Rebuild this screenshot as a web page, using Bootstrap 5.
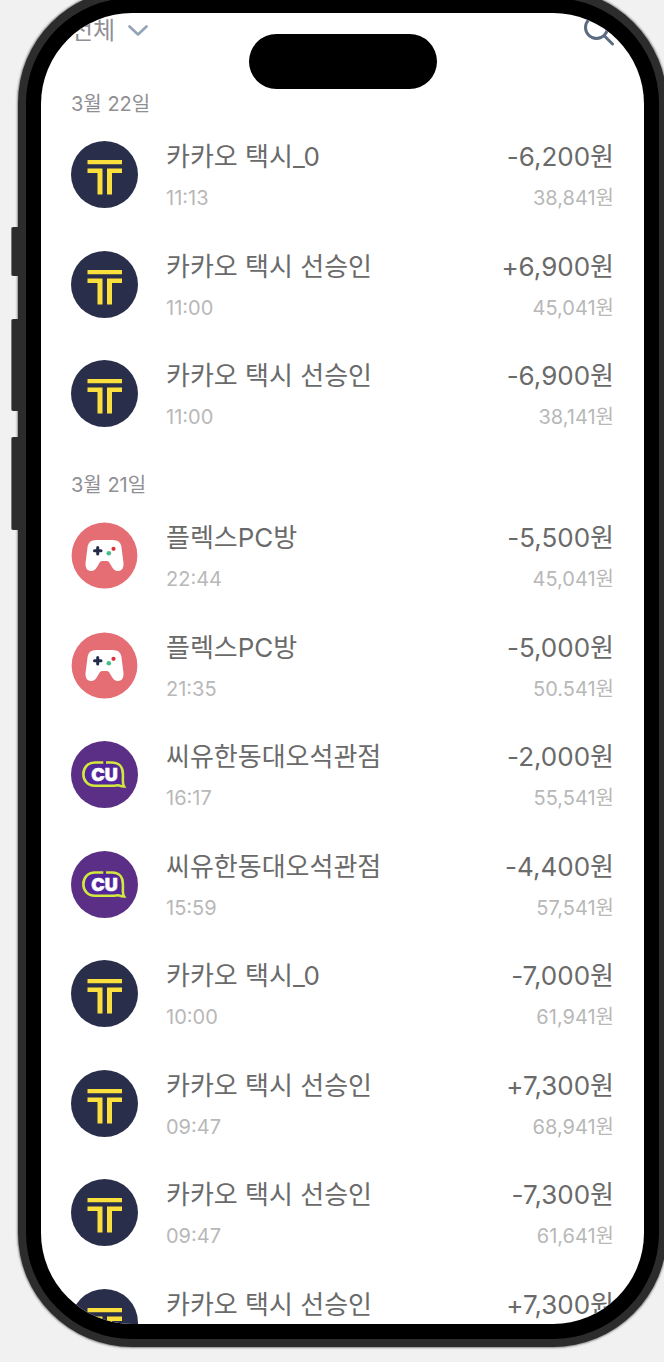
<!DOCTYPE html>
<html lang="ko">
<head>
<meta charset="utf-8">
<meta name="viewport" content="width=device-width, initial-scale=1">
<title>거래내역</title>
<link href="https://cdn.jsdelivr.net/npm/bootstrap@5.3.0/dist/css/bootstrap.min.css" rel="stylesheet">
<style>
  body { background: #f1f1f1; font-family: Inter, "Noto Sans CJK KR", sans-serif; }
  .device { margin: -11px -3px 15px 18px; padding: 15px; background: #000; border: 8px solid #2c2c2c; border-top-width: 9px; border-radius: 114px; box-shadow: 0 0 2px 1px #8a8a8a; min-height: 0; }
  .side-key { left: -15px; width: 7px; background: #2c2c2c; border-left: 1px solid #777; border-radius: 2px 0 0 2px; }
  .key-action { top: 229px; height: 49px; }
  .key-up { top: 321px; height: 92px; }
  .key-down { top: 439px; height: 93px; }
  .screen { border-radius: 91px; }
  .island { top: 21px; width: 188px; height: 55px; }
  .toolbar { height: 36px; margin-bottom: 19px; padding: 0 28px 0 30px; }
  .filter { appearance: none; border: 0; padding: 0 32px 0 0; font-size: 24px; line-height: 36px; color: #8f8f94;
    background: url("data:image/svg+xml,%3Csvg xmlns='http://www.w3.org/2000/svg' viewBox='0 0 20 12'%3E%3Cpath d='M1.5 1.5 10 9.5l8.500-8' fill='none' stroke='%2394a3b8' stroke-width='2.600' stroke-linecap='round' stroke-linejoin='round'/%3E%3C/svg%3E") no-repeat right 0 center / 20px 12px; }
  .day { height: 52px; padding: 20px 30px 0; font-size: 20px; line-height: 32px; font-weight: 400; color: #8f8f94; }
  .entry { height: 110px; padding: 16px 30px 0 30px; gap: 28px; }
  .entry:nth-child(even) { height: 109px; }
  .logo { width: 67px; height: 67px; margin-top: 5px; }
  .title { font-size: 26px; line-height: 42px; color: #6a6a6a; }
  .meta { font-size: 20px; line-height: 40px; color: #b8b8b8; }
</style>
</head>
<body>
<svg class="d-none" aria-hidden="true">
  <symbol id="taxi" viewBox="0 0 67 67">
    <circle cx="33.500" cy="33.500" r="33.500" fill="#292e4b"/>
    <path fill="#fbdf3c" d="M16.500 19H51v4.300H16.500zM16.500 27.600h15v26h-5V32h-10zM36 27.600h15V32H41v21.600h-5z"/>
  </symbol>
  <symbol id="game" viewBox="0 0 67 67">
    <circle cx="33.500" cy="33.500" r="32.900" fill="#e56d74"/>
    <path fill="#fff" d="M25 18h17q7 0 8.300 6l2.200 17q.5 7-5 8-4 .5-6.500-4l-3-5q-1-1-2.500-1h-4q-1.500 0-2.500 1l-3 5q-2.500 4.500-6.500 4-5.500-1-5-8l2.200-17q1.300-6 8.300-6z"/>
    <path stroke="#222c48" stroke-width="3" stroke-linecap="round" d="M23.500 28.800h6.500M26.700 25.500v6.500"/>
    <circle cx="37.800" cy="31.300" r="2.300" fill="#45bd88"/><circle cx="42.500" cy="26.800" r="2.100" fill="#d9333c"/>
  </symbol>
  <symbol id="cu" viewBox="0 0 67 67">
    <circle cx="33.500" cy="33.500" r="33.500" fill="#5c2f87"/>
    <path fill="#53259a" stroke="#d1e83c" stroke-width="2.600" d="M32.300 21.500H24c-15.500 0-15.500 23.300 0 23.300h17c4 0 5-1 7-.4 1.500.6 3 1.100 5 1.100-1.300-2-1.300-4-1.100-8V33c0-7-4-11.500-10.500-11.500H35"/>
    <text x="33.500" y="40" text-anchor="middle" font-family="Inter, sans-serif" font-weight="900" font-size="18" fill="#fff" stroke="#fff" stroke-width=".5">CU</text>
  </symbol>
</svg>

<div class="vh-100 overflow-hidden d-flex flex-column">
  <div class="device position-relative flex-grow-1 d-flex">
    <span class="side-key key-action position-absolute"></span>
    <span class="side-key key-up position-absolute"></span>
    <span class="side-key key-down position-absolute"></span>
    <main class="screen position-relative flex-grow-1 overflow-hidden bg-white">
      <div class="island position-absolute start-50 translate-middle-x bg-black rounded-pill"></div>
      <header class="toolbar d-flex align-items-center justify-content-between">
        <select class="filter" aria-label="거래 구분"><option>전체</option></select>
        <button class="btn p-0 border-0 lh-1" type="button" aria-label="검색">
          <svg width="32" height="32" viewBox="0 0 32 32" fill="none" stroke="#5b6b80" stroke-width="3" stroke-linecap="round"><circle cx="12.500" cy="12.500" r="11"/><path d="m20.500 21 8 8"/></svg>
        </button>
      </header>

      <h2 class="day m-0">3월 22일</h2>
      <ul class="list-unstyled m-0">
        <li class="entry d-flex"><svg class="logo flex-shrink-0"><use href="#taxi"/></svg><div class="flex-grow-1"><div class="title">카카오 택시_0</div><div class="meta">11:13</div></div><div class="text-end"><div class="title">-6,200원</div><div class="meta">38,841원</div></div></li>
        <li class="entry d-flex"><svg class="logo flex-shrink-0"><use href="#taxi"/></svg><div class="flex-grow-1"><div class="title">카카오 택시 선승인</div><div class="meta">11:00</div></div><div class="text-end"><div class="title">+6,900원</div><div class="meta">45,041원</div></div></li>
        <li class="entry d-flex"><svg class="logo flex-shrink-0"><use href="#taxi"/></svg><div class="flex-grow-1"><div class="title">카카오 택시 선승인</div><div class="meta">11:00</div></div><div class="text-end"><div class="title">-6,900원</div><div class="meta">38,141원</div></div></li>
      </ul>

      <h2 class="day m-0">3월 21일</h2>
      <ul class="list-unstyled m-0">
        <li class="entry d-flex"><svg class="logo flex-shrink-0"><use href="#game"/></svg><div class="flex-grow-1"><div class="title">플렉스PC방</div><div class="meta">22:44</div></div><div class="text-end"><div class="title">-5,500원</div><div class="meta">45,041원</div></div></li>
        <li class="entry d-flex"><svg class="logo flex-shrink-0"><use href="#game"/></svg><div class="flex-grow-1"><div class="title">플렉스PC방</div><div class="meta">21:35</div></div><div class="text-end"><div class="title">-5,000원</div><div class="meta">50.541원</div></div></li>
        <li class="entry d-flex"><svg class="logo flex-shrink-0"><use href="#cu"/></svg><div class="flex-grow-1"><div class="title">씨유한동대오석관점</div><div class="meta">16:17</div></div><div class="text-end"><div class="title">-2,000원</div><div class="meta">55,541원</div></div></li>
        <li class="entry d-flex"><svg class="logo flex-shrink-0"><use href="#cu"/></svg><div class="flex-grow-1"><div class="title">씨유한동대오석관점</div><div class="meta">15:59</div></div><div class="text-end"><div class="title">-4,400원</div><div class="meta">57,541원</div></div></li>
        <li class="entry d-flex"><svg class="logo flex-shrink-0"><use href="#taxi"/></svg><div class="flex-grow-1"><div class="title">카카오 택시_0</div><div class="meta">10:00</div></div><div class="text-end"><div class="title">-7,000원</div><div class="meta">61,941원</div></div></li>
        <li class="entry d-flex"><svg class="logo flex-shrink-0"><use href="#taxi"/></svg><div class="flex-grow-1"><div class="title">카카오 택시 선승인</div><div class="meta">09:47</div></div><div class="text-end"><div class="title">+7,300원</div><div class="meta">68,941원</div></div></li>
        <li class="entry d-flex"><svg class="logo flex-shrink-0"><use href="#taxi"/></svg><div class="flex-grow-1"><div class="title">카카오 택시 선승인</div><div class="meta">09:47</div></div><div class="text-end"><div class="title">-7,300원</div><div class="meta">61,641원</div></div></li>
        <li class="entry d-flex"><svg class="logo flex-shrink-0"><use href="#taxi"/></svg><div class="flex-grow-1"><div class="title">카카오 택시 선승인</div></div><div class="text-end"><div class="title">+7,300원</div></div></li>
      </ul>
    </main>
  </div>
</div>
<script src="https://cdn.jsdelivr.net/npm/bootstrap@5.3.0/dist/js/bootstrap.bundle.min.js"></script>
</body>
</html>
